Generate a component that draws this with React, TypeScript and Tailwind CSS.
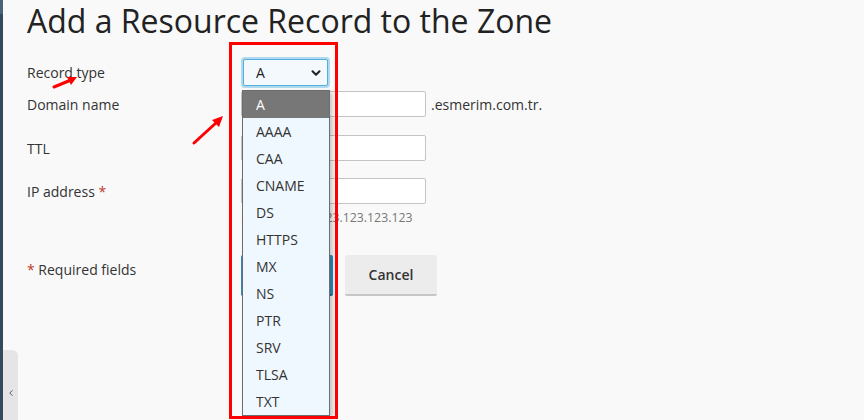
import { ChevronDown, ChevronLeft } from "lucide-react"

const recordTypes = ["A", "AAAA", "CAA", "CNAME", "DS", "HTTPS", "MX", "NS", "PTR", "SRV", "TLSA", "TXT"]

function Field({ label, required, children }: { label: string; required?: boolean; children: React.ReactNode }) {
  return (
    <div className="flex items-center">
      <div className="w-[214px] text-[14px] text-[#333]">
        {label}
        {required && <span className="text-[#c0392b]"> *</span>}
      </div>
      {children}
    </div>
  )
}

export default function App() {
  return (
    <div className="relative w-[864px] h-[420px] overflow-hidden bg-[#f9f9f9] flex font-['Open_Sans',sans-serif]">
      {/* Sidebar edge */}
      <aside className="w-[3px] flex flex-col shrink-0">
        <div className="h-[14px] bg-[#4b6378]" />
        <div className="flex-1 bg-[#34495e]" />
      </aside>

      <main className="flex-1 pl-[24px]">
        <h1 className="mt-[1px] text-[32px] leading-[40px] text-[#222] font-normal">
          Add a Resource Record to the Zone
        </h1>

        <div className="mt-[16px] flex flex-col">
          <Field label="Record type">
            <div className="h-[31px] w-[89px] p-[2px] rounded-[4px] bg-[#aed9ee]">
              <div className="h-full flex items-center justify-between pl-[12px] pr-[4px] border border-[#56acda] bg-[#f3f9fd] rounded-[2px] text-[14px] text-[#222]">
                <span>A</span>
                <ChevronDown size={14} strokeWidth={3.5} className="text-[#222]" />
              </div>
            </div>
          </Field>

          <div className="mt-[3px]">
            <Field label="Domain name">
              <div className="h-[26px] w-[185px] border border-[#c4c4c4] bg-white rounded-[2px]" />
              <span className="ml-[5px] text-[14px] text-[#333]">.esmerim.com.tr.</span>
            </Field>
          </div>

          <div className="mt-[18px]">
            <Field label="TTL">
              <div className="h-[26px] w-[185px] border border-[#c4c4c4] bg-white rounded-[2px]" />
            </Field>
          </div>

          <div className="mt-[17px]">
            <Field label="IP address" required>
              <div className="h-[26px] w-[185px] border border-[#c4c4c4] bg-white rounded-[2px]" />
            </Field>
          </div>
          <div className="pl-[214px] mt-[5px] text-[12.3px] leading-[17px] text-[#777]">
            For example, 123.123.123.123
          </div>

          <div className="mt-[29px] flex items-start">
            <div className="w-[214px] pt-[4px] text-[14px] text-[#333]">
              <span className="text-[#c0392b]">*</span> Required fields
            </div>
            <button className="h-[41px] w-[92px] rounded-[2px] bg-[#2b8ec0] border-b-2 border-[#1f6f98] text-[14px] font-semibold text-white">
              OK
            </button>
            <button className="ml-[12px] h-[41px] w-[92px] rounded-[2px] bg-[#ececec] border-b-2 border-[#c6c6c6] text-[14px] font-semibold text-[#333]">
              Cancel
            </button>
          </div>
        </div>
      </main>

      {/* Sidebar collapse tab */}
      <div className="absolute left-[3px] top-[350px] w-[15px] h-[70px] bg-[#e5e5e5] rounded-tr-[6px] flex items-center justify-center pt-[16px]">
        <ChevronLeft size={10} strokeWidth={2} className="text-[#444]" />
      </div>

      {/* Open select list */}
      <ul className="absolute left-[242px] top-[90px] w-[88px] border border-[#6d6d6d] bg-[#f0f8ff] shadow-[3px_2px_4px_rgba(0,0,0,0.2)]">
        {recordTypes.map((t, i) => (
          <li
            key={t}
            className={
              i === 0
                ? "h-[27px] leading-[27px] pl-[13px] text-[14px] bg-[#777] text-white"
                : "h-[27px] leading-[27px] pl-[13px] text-[14px] text-[#333]"
            }
          >
            {t}
          </li>
        ))}
      </ul>

      {/* Annotation box */}
      <div className="absolute left-[229px] top-[42px] w-[109px] h-[377px] border-[3px] border-[#ff0000]" />

      {/* Annotation arrows */}
      <svg className="absolute inset-0 pointer-events-none" width="864" height="420">
        <g stroke="#ff0000" strokeWidth="3" strokeLinecap="round">
          <line x1="54" y1="87" x2="71" y2="80" />
          <line x1="194" y1="143" x2="217" y2="122" />
        </g>
        <g fill="#ff0000">
          <polygon points="77,77 67,77 71,85" />
          <polygon points="223,116 212,120 219,127" />
        </g>
      </svg>
    </div>
  )
}
